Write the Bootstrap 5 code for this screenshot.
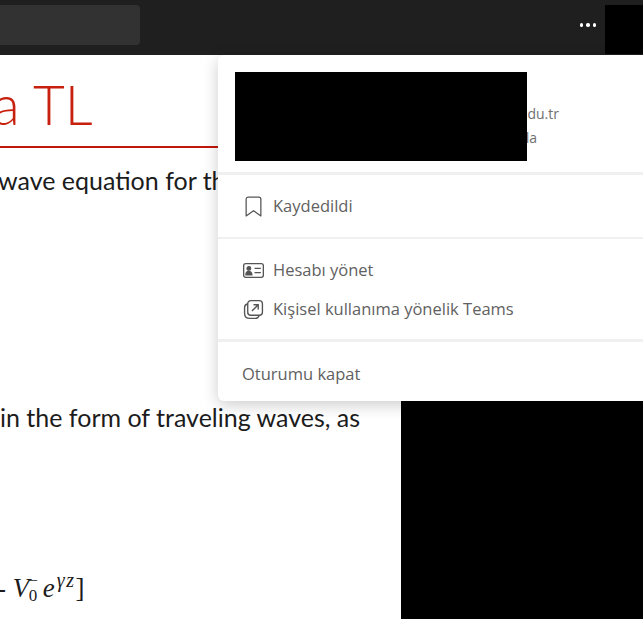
<!DOCTYPE html>
<html lang="tr">
<head>
  <meta charset="UTF-8">
  <title>Teams</title>
  <meta name="viewport" content="width=device-width, initial-scale=1">
  <link href="https://cdn.jsdelivr.net/npm/bootstrap@5.3.3/dist/css/bootstrap.min.css" rel="stylesheet">
  <style>
    html, body { height: 619px; overflow: hidden; }
    body { background: #fff; font-family: "Open Sans", sans-serif; position: relative; }

    .top-bar { height: 55px; background: #1f1f1f; padding-top: 5px; }
    .search-box { width: 140px; height: 40px; background: #323232; border-radius: 0 4px 4px 0; }
    .more-dots { gap: 3px; margin-right: 9px; margin-bottom: 10px; }
    .more-dots span { width: 3.5px; height: 3.5px; background: #fff; border-radius: 50%; }
    .avatar-block { width: 38px; height: 49px; background: #000; }

    .slide { height: 564px; overflow: hidden; font-family: Lato, "Open Sans", sans-serif; color: #1c1c1c; }
    .slide-title { height: 93px; border-bottom: 2px solid #c0170a; width: 218px; margin: 0; padding-top: 16px;
      color: #c8200e; font-size: 55px; font-weight: 300; line-height: 66px; text-indent: -7px; white-space: nowrap; overflow: hidden; }
    .slide-line { font-size: 25px; line-height: 30px; white-space: nowrap; margin: 0; }
    .line-wave { margin: 17px 0 0 -2px; width: 220px; overflow: hidden; }
    .line-travel { margin-top: 207px; }
    .line-math { margin-top: 141px; font-family: "Liberation Serif", serif; font-size: 27px; margin-left: -3px; }
    .line-math sup { font-size: 20px; font-style: italic; top: -.5em; letter-spacing: 1.5px; }
    .math-stack { display: inline-flex; flex-direction: column; align-items: center; font-size: 17px; line-height: 15px; vertical-align: 11px; margin: 0 5px 0 -1px; }
    .math-e { margin-right: 2px; }

    .account-menu { position: absolute; left: 218px; top: 55px; width: 440px; height: 346px; background: #fff;
      border-radius: 6px; box-shadow: 0 4px 16px rgba(0, 0, 0, .2); color: #616161; font-size: 16.5px; }
    .menu-head { height: 117px; padding-top: 47px; font-size: 14px; color: #707070; }
    .menu-head div { line-height: 24px; text-align: right; }
    .mail-line { width: 341px; }
    .org-line { width: 319px; }
    .menu-rule { height: 3px; background: #f0f0f0; }
    .menu-rule-thin { height: 2px; background: #f0f0f0; }
    .menu-group { padding: 12px 0 10px; }
    .menu-row { height: 39px; padding-left: 25px; gap: 9px; }
    .menu-row.menu-saved { height: 62px; }
    .menu-row svg { width: 21px; height: 21px; flex: none; }
    .menu-signout { height: 59px; padding-left: 24px; padding-top: 5px; }

    .hide-block { position: absolute; background: #000; }
    .hide-name { left: 235px; top: 72px; width: 292px; height: 89px; }
    .hide-corner { left: 401px; top: 401px; width: 242px; height: 218px; }
  </style>
</head>
<body>

  <div class="top-bar d-flex align-items-start">
    <div class="search-box"></div>
    <div class="d-flex align-items-center ms-auto align-self-center more-dots">
      <span></span><span></span><span></span>
    </div>
    <div class="avatar-block"></div>
  </div>

  <div class="slide">
    <h1 class="slide-title">a TL</h1>
    <p class="slide-line line-wave">wave equation for the</p>
    <p class="slide-line line-travel">in the form of traveling waves, as</p>
    <p class="slide-line line-math">- <i>V</i><span class="math-stack"><span>&minus;</span><span>0</span></span><i class="math-e">e</i><sup>&gamma;z</sup>]</p>
  </div>

  <div class="account-menu">
    <div class="menu-head">
      <div class="mail-line">du.tr</div>
      <div class="org-line">la</div>
    </div>
    <div class="menu-rule"></div>
    <div class="d-flex align-items-center menu-row menu-saved">
      <svg viewBox="0 0 20 20" fill="none" stroke="#555" stroke-width="1.2" stroke-linejoin="round"><path d="M3 3a2 2 0 0 1 2-2h10a2 2 0 0 1 2 2v16l-7-5-7 5z"/></svg>
      <span>Kaydedildi</span>
    </div>
    <div class="menu-rule-thin"></div>
    <div class="menu-group">
      <div class="d-flex align-items-center menu-row">
        <svg viewBox="0 0 20 20" fill="none" stroke="#555" stroke-width="1.3"><rect x=".6" y="3.5" width="18.8" height="13" rx="2"/><circle cx="5.6" cy="8" r="1.7" fill="#555"/><path d="M2.8 14c0-4 5.6-4 5.6 0z" fill="#555"/><path d="M11 8h6M11 12h6"/></svg>
        <span>Hesabı yönet</span>
      </div>
      <div class="d-flex align-items-center menu-row">
        <svg viewBox="0 0 20 20" fill="none" stroke="#555" stroke-width="1.3"><rect x="4.5" y="1.5" width="14" height="14" rx="3"/><path d="M4.5 4.5c-1.8.5-3 1.6-3 3.6v5.4c0 3 2 5 5 5h5.4c2 0 3-1.2 3.6-3"/><path d="M8.5 11.5l6-6M10 5.5h4.5V10"/></svg>
        <span>Kişisel kullanıma yönelik Teams</span>
      </div>
    </div>
    <div class="menu-rule"></div>
    <div class="d-flex align-items-center menu-signout">Oturumu kapat</div>
  </div>

  <div class="hide-block hide-name"></div>
  <div class="hide-block hide-corner"></div>

  <script src="https://cdn.jsdelivr.net/npm/bootstrap@5.3.3/dist/js/bootstrap.bundle.min.js"></script>
</body>
</html>
